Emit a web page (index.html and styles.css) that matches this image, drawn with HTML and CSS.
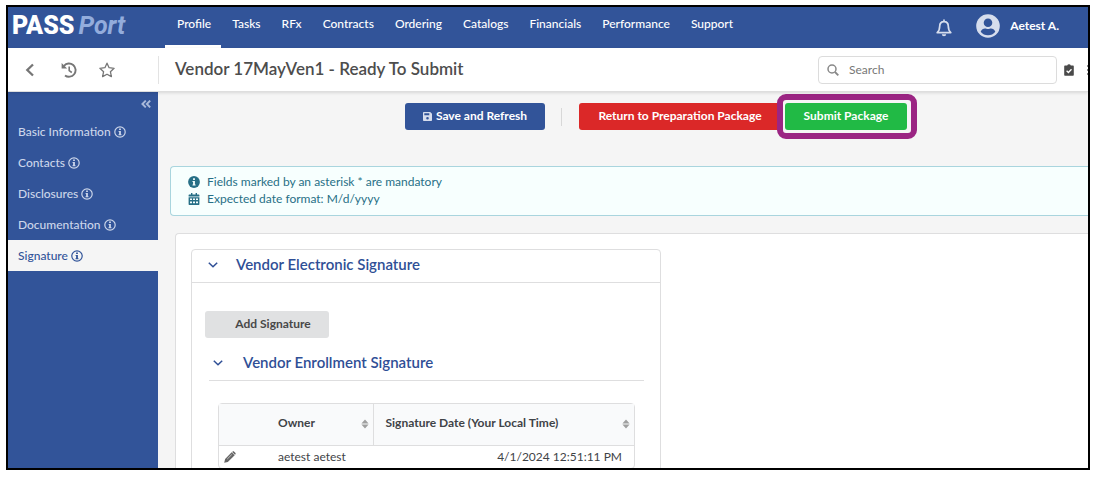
FILE: index.html
```html
<!DOCTYPE html>
<html lang="en">
<head>
  <meta charset="UTF-8" />
  <meta name="viewport" content="width=device-width, initial-scale=1" />
  <title>PASSPort | Vendor 17MayVen1</title>
  <link rel="stylesheet" href="styles.css">
</head>
<body>

<!-- shared icons -->
<svg class="defs" aria-hidden="true">
  <symbol id="info" viewBox="0 0 12 12">
    <circle cx="6" cy="6" r="5.2" fill="none" stroke="currentColor" stroke-width="1.2"/>
    <path d="M5.1 2.5h1.8v1.6H5.1zM4.6 5h2.3v3.3h.6v1h-3v-1h.6V6h-.5z" fill="currentColor"/>
  </symbol>
  <symbol id="chevron" viewBox="0 0 10 6">
    <path d="M.8.8 5 4.800 9.200.8" fill="none" stroke="currentColor" stroke-width="1.500"/>
  </symbol>
  <symbol id="sort" viewBox="0 0 8 10">
    <path d="M.4 4.400 4 .4l3.600 4zM.4 5.600h7.200L4 9.600z" fill="currentColor"/>
  </symbol>
</svg>

<div class="app">
  <header class="topbar">
    <a class="logo" href="#"><b>PASS</b><i>Port</i></a>
    <nav class="menu">
      <a class="active" href="#">Profile</a>
      <a href="#">Tasks</a>
      <a href="#">RFx</a>
      <a href="#">Contracts</a>
      <a href="#">Ordering</a>
      <a href="#">Catalogs</a>
      <a href="#">Financials</a>
      <a href="#">Performance</a>
      <a href="#">Support</a>
    </nav>
    <div class="account">
      <button class="icon-btn bell" type="button" aria-label="Notifications">
        <svg width="16" height="18" viewBox="0 0 16 18"><path d="M8 1v1.600M8 2.600c-2.800 0-4.300 2-4.300 4.700 0 3.500-1 5-2.500 6.300h13.600c-1.500-1.300-2.500-2.800-2.500-6.300 0-2.700-1.500-4.700-4.300-4.700z" fill="none" stroke="currentColor" stroke-width="1.700" stroke-linejoin="round" stroke-linecap="round"/><path d="M5.800 15.200h4.400a2.200 2.100 0 0 1-4.400 0z" fill="currentColor"/></svg>
      </button>
      <a class="user" href="#">
        <svg width="24" height="24" viewBox="0 0 24 24"><circle cx="12" cy="12" r="11.800" fill="#d6dded"/><path fill="#325499" d="M12 4.500a4.300 4.300 0 1 1 0 8.600 4.300 4.300 0 0 1 0-8.600zM4.700 17.700c.9-2.200 2.500-3.200 4.300-3.200.9 0 1.700.6 3 .6s2.100-.6 3-.6c1.800 0 3.400 1 4.300 3.200A9.300 9.300 0 0 1 12 21.300a9.300 9.300 0 0 1-7.300-3.600z"/></svg>
        <span>Aetest A.</span>
      </a>
    </div>
  </header>

  <div class="toolbar">
    <div class="shortcuts">
      <button class="icon-btn" type="button" aria-label="Back">
        <svg width="16" height="16" viewBox="0 0 16 16"><path d="M10 2.500 4.300 8l5.700 5.500" fill="none" stroke="currentColor" stroke-width="2.300"/></svg>
      </button>
      <button class="icon-btn" type="button" aria-label="History">
        <svg width="16" height="16" viewBox="0 0 16 16"><path d="M3 3.800A6.600 6.600 0 1 1 4 13.400" fill="none" stroke="currentColor" stroke-width="1.900"/><path d="M.6.900v5.500h5.500z" fill="currentColor"/><path d="M8.200 4.500v4.200l2.600 1.800" fill="none" stroke="currentColor" stroke-width="1.600"/></svg>
      </button>
      <button class="icon-btn" type="button" aria-label="Favorite">
        <svg width="16" height="16" viewBox="0 0 16 16"><path d="m8 1.200 2.100 4.500 5 .6-3.700 3.400 1 4.900L8 12.200l-4.400 2.400 1-4.900L.9 6.300l5-.6z" fill="none" stroke="currentColor" stroke-width="1.300" stroke-linejoin="round"/></svg>
      </button>
    </div>
    <h1>Vendor 17MayVen1 - Ready To Submit</h1>
    <label class="search">
      <svg width="12" height="12" viewBox="0 0 12 12"><circle cx="5" cy="5" r="4" fill="none" stroke="currentColor" stroke-width="1.500"/><path d="m8 8 3.300 3.300" stroke="currentColor" stroke-width="1.800"/></svg>
      <input type="search" placeholder="Search" aria-label="Search" />
    </label>
    <button class="icon-btn clipboard" type="button" aria-label="Tasks">
      <svg width="10" height="12" viewBox="0 0 10 12"><path d="M1.200 1.500h2a1.900 1.900 0 0 1 3.600 0h2c.6 0 1 .4 1 1v8.300c0 .6-.4 1-1 1H1.200c-.6 0-1-.4-1-1V2.500c0-.6.4-1 1-1z" fill="currentColor"/><path d="m2.600 6.800 1.800 1.700 3.100-3.300" fill="none" stroke="#fff" stroke-width="1.300"/></svg>
    </button>
    <button class="icon-btn more" type="button" aria-label="More">
      <svg width="3" height="12" viewBox="0 0 3 12"><path d="M0 1h3v2H0zM0 5h3v2H0zM0 9h3v2H0z" fill="currentColor"/></svg>
    </button>
  </div>

  <div class="body">
    <aside class="sidebar">
      <button class="icon-btn collapse" type="button" aria-label="Collapse menu">
        <svg width="10" height="8" viewBox="0 0 10 8"><path d="M4.800.600 1.400 4l3.400 3.400M9.200.600 5.800 4l3.400 3.400" fill="none" stroke="currentColor" stroke-width="1.900"/></svg>
      </button>
      <nav>
        <a href="#">Basic Information <svg><use href="#info"/></svg></a>
        <a href="#">Contacts <svg><use href="#info"/></svg></a>
        <a href="#">Disclosures <svg><use href="#info"/></svg></a>
        <a href="#">Documentation <svg><use href="#info"/></svg></a>
        <a class="active" href="#">Signature <svg><use href="#info"/></svg></a>
      </nav>
    </aside>

    <main class="content">
      <div class="actions">
        <button class="btn save" type="button">
          <svg width="9" height="9" viewBox="0 0 9 9"><path fill-rule="evenodd" d="M.8 0h6.400L9 1.800v6.400c0 .5-.3.800-.8.800H.8C.3 9 0 8.700 0 8.200V.8C0 .3.300 0 .8 0zM1.300 1.200v2.100h5V1.200zM4.500 4.900a1.300 1.300 0 1 0 0 2.600 1.300 1.300 0 0 0 0-2.600z" fill="currentColor"/></svg>
          <span>Save and Refresh</span>
        </button>
        <span class="divider"></span>
        <button class="btn return" type="button">Return to Preparation Package</button>
        <span class="highlight"><button class="btn submit" type="button">Submit Package</button></span>
      </div>

      <div class="message">
        <p>
          <svg width="12" height="12" viewBox="0 0 12 12"><circle cx="6" cy="6" r="5.900" fill="currentColor"/><path d="M5.100 2.200h1.800v1.700H5.100zM4.500 5h2.400v3.500h.7v1.100H4.500V8.500h.6V6.100h-.6z" fill="#f7fffe"/></svg>
          <span>Fields marked by an asterisk * are mandatory</span>
        </p>
        <p>
          <svg width="12" height="12" viewBox="0 0 12 12"><path fill-rule="evenodd" d="M3 0h1.400v1.400h3.200V0H9v1.400h1.700c.4 0 .7.300.7.700v1.300H.6V2.100c0-.4.300-.7.700-.7H3zM.6 4.200h10.800v7.100c0 .4-.3.700-.7.700H1.300a.7.700 0 0 1-.7-.7zM2 5.500v1.600h2V5.500zm3 0v1.600h2V5.500zm3 0v1.600h2V5.500zM2 8.600v1.600h2V8.600zm3 0v1.600h2V8.600zm3 0v1.600h2V8.600z" fill="currentColor"/></svg>
          <span>Expected date format: M/d/yyyy</span>
        </p>
      </div>

      <div class="panel">
        <section class="card">
          <h2><svg><use href="#chevron"/></svg>Vendor Electronic Signature</h2>
          <div class="card-body">
            <button class="btn add" type="button">Add Signature</button>
            <h3><svg><use href="#chevron"/></svg>Vendor Enrollment Signature</h3>
            <div class="grid">
              <table>
                <thead>
                  <tr>
                    <th class="edit-col"></th>
                    <th class="owner-col"><span>Owner <svg><use href="#sort"/></svg></span></th>
                    <th class="date-col"><span>Signature Date (Your Local Time) <svg><use href="#sort"/></svg></span></th>
                  </tr>
                </thead>
                <tbody>
                  <tr>
                    <td class="edit-col">
                      <button class="icon-btn" type="button" aria-label="Edit">
                        <svg width="12" height="12" viewBox="0 0 12 12"><path d="m7.700 1.300 3 3-6.900 6.600L.2 11.800l.9-3.700zM8.500.7c.5-.5 1.200-.5 1.700 0l1.100 1.100c.5.500.5 1.200 0 1.700l-.3.300L8.200 1z" fill="currentColor"/><path d="m3.200 8.100 4.600-4.600" stroke="#fff" stroke-width=".6"/></svg>
                      </button>
                    </td>
                    <td class="owner-col">aetest aetest</td>
                    <td class="date">4/1/2024 12:51:11 PM</td>
                  </tr>
                </tbody>
              </table>
            </div>
          </div>
        </section>
      </div>
    </main>
  </div>
</div>

</body>
</html>
```
FILE: styles.css
```css
* {
  box-sizing: border-box;
}

body {
  margin: 0;
  height: 100vh;
  padding: 5px 14px 9px 6px;
  display: flex;
  background: #fff;
  font-family: Lato, sans-serif;
  font-size: 12px;
  color: #3f4347;
}

a {
  color: inherit;
  text-decoration: none;
}

button {
  font: inherit;
  cursor: pointer;
}

svg {
  flex: none;
}

.defs {
  position: absolute;
  width: 0;
  height: 0;
}

.icon-btn {
  display: flex;
  padding: 0;
  border: none;
  background: none;
  color: inherit;
}

.app {
  flex: 1;
  min-width: 0;
  display: flex;
  flex-direction: column;
  border: 2px solid #000;
  overflow: hidden;
}

/* top bar */
.topbar {
  flex: none;
  display: flex;
  height: 41px;
  background: #325499;
  color: #fff;
}

.logo {
  width: 157px;
  padding: 4px;
  font-family: Roboto, sans-serif;
  font-size: 25px;
  line-height: 30px;
  font-weight: bold;
}

.logo b {
  font-weight: 900;
}

.logo i {
  margin-left: 4px;
  color: #93acdc;
}

.menu {
  display: flex;
}

.menu a {
  padding: 8px 10px 0 11px;
  line-height: 18px;
  font-weight: 500;
  border-bottom: 3px solid transparent;
}

.menu a.active {
  padding-left: 12px;
  border-color: #fff;
}

.account {
  display: flex;
  align-items: center;
  gap: 24px;
  margin-left: auto;
  padding: 0 29px 3px 0;
}

.bell {
  color: #d6dded;
  padding-top: 4px;
}

.user {
  display: flex;
  align-items: center;
  gap: 10px;
  font-weight: bold;
}

.user span {
  padding-bottom: 2px;
}

/* page title row */
.toolbar {
  flex: none;
  display: flex;
  align-items: center;
  height: 44px;
  background: #fff;
  border-bottom: 1px solid #dedede;
  box-shadow: 0 1px 3px rgba(0, 0, 0, 0.12);
  z-index: 1;
}

.shortcuts {
  display: flex;
  align-items: center;
  gap: 22px;
  width: 151px;
  height: 28px;
  padding-left: 15px;
  border-right: 1px solid #e3e3e3;
  color: #767676;
}

h1 {
  margin: 0 0 3px 16px;
  font-size: 17px;
  font-weight: 600;
  color: #4d4d4d;
}

.search {
  display: flex;
  align-items: center;
  gap: 10px;
  width: 239px;
  height: 28px;
  margin-left: auto;
  padding: 0 8px;
  border: 1px solid #dcdcdc;
  border-radius: 4px;
  color: #888;
}

.search input {
  flex: 1;
  min-width: 0;
  padding: 0 0 1px;
  border: none;
  outline: none;
  font: inherit;
}

.search input::placeholder {
  color: #777;
}

.clipboard {
  margin: 0 13px 0 7px;
  color: #4a4a4a;
}

.more {
  width: 1px;
  overflow: hidden;
  color: #888;
}

/* sidebar */
.body {
  flex: 1;
  min-height: 0;
  display: flex;
}

.sidebar {
  flex: none;
  width: 150px;
  background: #325499;
  color: #ccd6ea;
}

.collapse {
  margin: 8px 7px 8px auto;
  color: #a9b9da;
}

.sidebar a {
  display: flex;
  align-items: center;
  gap: 3px;
  height: 31px;
  padding-left: 10px;
  font-weight: 500;
}

.sidebar a svg {
  width: 12px;
  height: 12px;
}

.sidebar a.active {
  background: #f5f5f5;
  color: #325499;
}

/* content */
.content {
  flex: 1;
  min-width: 0;
  overflow: hidden;
  background: #f5f5f5;
}

.actions {
  display: flex;
  align-items: center;
  justify-content: center;
  padding: 11px 0 0 66px;
}

.btn {
  height: 27px;
  padding: 0 10px 2px;
  border: none;
  border-radius: 3px;
  color: #fff;
  font-weight: bold;
  white-space: nowrap;
}

.save {
  display: flex;
  align-items: center;
  justify-content: center;
  gap: 4px;
  width: 140px;
  background: #325499;
}

.save svg {
  margin-top: 2px;
  color: #d6dded;
}

.divider {
  width: 1px;
  height: 18px;
  margin: 0 17px 0 16px;
  background: #d8d8d8;
}

.return {
  width: 202px;
  background: #db2828;
}

.highlight {
  position: relative;
  margin-left: 4px;
}

.highlight::before {
  content: "";
  position: absolute;
  inset: -9px -10px -9px -8px;
  border: 6px solid #9b2583;
  border-radius: 9px;
  background: #f5f5f5;
}

.submit {
  position: relative;
  display: block;
  width: 122px;
  background: #21ba45;
}

.message {
  margin: 36px 0 0 12px;
  padding: 6px 17px 8px;
  border: 1px solid #a9d5de;
  border-right: none;
  border-radius: 4px 0 0 4px;
  background: #f7fffe;
  color: #276f86;
}

.message p {
  display: flex;
  align-items: center;
  gap: 7px;
  margin: 0;
  line-height: 17px;
}

.panel {
  margin: 17px 0 0 17px;
  padding: 15px;
  border: 1px solid #dededf;
  border-right: none;
  border-radius: 4px 0 0 0;
  background: #fff;
}

.card {
  width: 470px;
  max-width: 100%;
  border: 1px solid #dededf;
  border-radius: 4px 4px 0 0;
}

h2, h3 {
  display: flex;
  align-items: center;
  margin: 0;
  font-size: 15px;
  font-weight: 600;
  color: #2f4f96;
}

h2 {
  gap: 18px;
  height: 33px;
  padding: 0 16px 4px;
  border-bottom: 1px solid #dededf;
}

h2 svg, h3 svg {
  width: 10px;
  height: 6px;
  margin-top: 2px;
}

.card-body {
  padding: 28px 16px 16px 17px;
}

.add {
  width: 124px;
  margin-left: -4px;
  padding-left: 22px;
  background: #e0e1e2;
  color: #484848;
}

h3 {
  gap: 20px;
  height: 43px;
  padding: 6px 4px 0;
  border-bottom: 1px solid #dededf;
}

.grid {
  margin: 22px 9px 0;
  border: 1px solid #dededf;
  border-radius: 4px;
}

table {
  width: 100%;
  border-collapse: collapse;
  table-layout: fixed;
}

th {
  height: 41px;
  padding: 0 4px 3px 12px;
  background: #f9fafb;
  border-bottom: 1px solid #dededf;
  text-align: left;
}

th span {
  display: flex;
  align-items: center;
  justify-content: space-between;
}

th svg {
  width: 8px;
  height: 10px;
  margin-top: 2px;
  color: #a0a0a0;
}

.date-col {
  border-left: 1px solid #dededf;
}

td {
  height: 23px;
  padding: 0 12px;
}

.edit-col {
  width: 47px;
  padding: 0 5px;
  color: #666;
}

.owner-col {
  width: 107px;
}

.date {
  text-align: right;
}
```
